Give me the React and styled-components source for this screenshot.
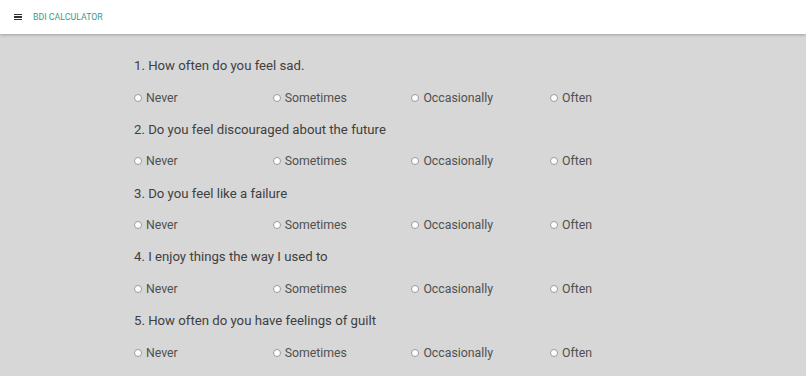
import React from "react";
import styled, { createGlobalStyle } from "styled-components";

const Global = createGlobalStyle`
  html, body { margin: 0; padding: 0; }
  body {
    background: #d7d7d7;
    font-family: Roboto, "Liberation Sans", Arial, sans-serif;
    -webkit-font-smoothing: antialiased;
  }
`;

const Header = styled.header`
  height: 34px;
  background: #fff;
  display: flex;
  align-items: center;
  padding-left: 14px;
  gap: 11px;
  box-shadow: 0 1px 3px rgba(0,0,0,0.25);
  position: relative;
  z-index: 1;
`;

const Burger = styled.span`
  display: flex;
  flex-direction: column;
  gap: 1.2px;
  width: 8px;
  & > i {
    display: block;
    height: 1.4px;
    background: #333;
  }
`;

const Title = styled.span`
  font-size: 8.8px;
  color: #3a9a89;
  letter-spacing: 0;
`;

const Main = styled.main`
  padding: 24px 0 0 134px;
  display: flex;
  flex-direction: column;
`;

const Question = styled.section`
  display: flex;
  flex-direction: column;
`;

const QText = styled.div`
  font-size: 13.2px;
  color: #404040;
  height: 31.5px;
  line-height: 16px;
`;

const Options = styled.div`
  display: grid;
  grid-template-columns: repeat(4, 138.7px);
  height: 32.25px;
  align-items: start;
`;

const Option = styled.label`
  display: flex;
  align-items: center;
  gap: 4px;
  font-size: 12.3px;
  color: #505050;
  line-height: 16px;
`;

const Radio = styled.span`
  width: 6px;
  height: 6px;
  border-radius: 50%;
  background: #fff;
  border: 0.8px solid #9a9a9a;
  flex: none;
`;

const questions = [
  "1. How often do you feel sad.",
  "2. Do you feel discouraged about the future",
  "3. Do you feel like a failure",
  "4. I enjoy things the way I used to",
  "5. How often do you have feelings of guilt",
];
const opts = ["Never", "Sometimes", "Occasionally", "Often"];

export default function App() {
  return (
    <>
      <Global />
      <Header>
        <Burger><i /><i /><i /></Burger>
        <Title>BDI CALCULATOR</Title>
      </Header>
      <Main>
        {questions.map((q) => (
          <Question key={q}>
            <QText>{q}</QText>
            <Options>
              {opts.map((o) => (
                <Option key={o}>
                  <Radio />
                  {o}
                </Option>
              ))}
            </Options>
          </Question>
        ))}
      </Main>
    </>
  );
}
